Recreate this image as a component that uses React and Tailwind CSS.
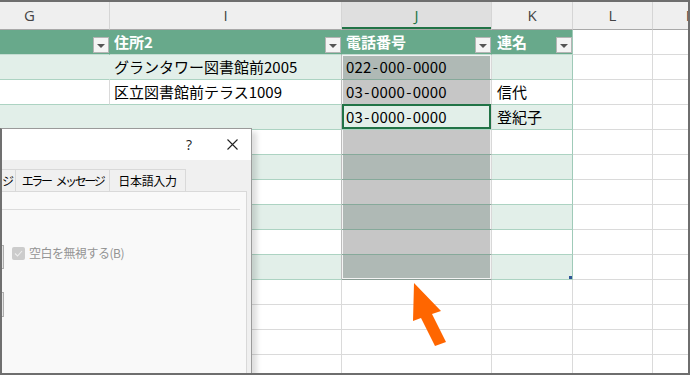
import React from "react";

const JP = "font-['Noto_Sans_CJK_JP','Noto_Sans',sans-serif]";

const COLS = [
  { key: "G", w: "w-[160px]" },
  { key: "I", w: "w-[232px]" },
  { key: "J", w: "w-[150px]" },
  { key: "K", w: "w-[81px]" },
  { key: "L", w: "w-[80px]" },
  { key: "M", w: "w-[80px]" },
];

const DATA = {
  1: { I: "グランタワー図書館前2005", J: "022-000-0000", K: "" },
  2: { I: "区立図書館前テラス1009", J: "03-0000-0000", K: "信代" },
  3: { I: "", J: "03-0000-0000", K: "登紀子" },
};

function Phone({ v }) {
  const parts = v.split("-");
  return (
    <span className="inline-flex">
      {parts.map((p, i) => (
        <React.Fragment key={i}>
          {i > 0 && <span className="inline-block w-[8px] text-center">-</span>}
          <span className="tracking-[0.15px]">{p}</span>
        </React.Fragment>
      ))}
    </span>
  );
}

function DropBtn() {
  return (
    <div className="absolute right-0 bottom-[1px] w-[16px] h-[16px] bg-[#f4f4f4] border border-[#b4b4b4] flex items-center justify-center">
      <svg width="8" height="5" viewBox="0 0 8 5" className="mt-[2px]">
        <polygon points="0,0 8,0 4,4" fill="#555" />
      </svg>
    </div>
  );
}

function ColHeader() {
  return (
    <div className="flex h-[28px] shrink-0">
      {COLS.map((c) => {
        const sel = c.key === "J";
        return (
          <div
            key={c.key}
            className={`${c.w} shrink-0 h-full flex items-center justify-center border-r border-b border-r-[#d5d5d5] border-b-[#a9a9a9] font-['Open_Sans','Noto_Sans',sans-serif] text-[15px] ${
              sel
                ? "bg-[#dfdfdf] text-[#217346] shadow-[inset_0_-2px_0_#217346]"
                : "bg-[#efefef] text-[#444]"
            }`}
          >
            {c.key}
          </div>
        );
      })}
    </div>
  );
}

function TableHeader() {
  const titles = { G: "", I: "住所2", J: "電話番号", K: "連名" };
  return (
    <div className="flex h-[25px] shrink-0">
      {COLS.map((c) => {
        if (c.key === "L" || c.key === "M") {
          return (
            <div key={c.key} className={`${c.w} shrink-0 h-full bg-white border-r border-b border-[#dadada]`} />
          );
        }
        return (
          <div
            key={c.key}
            className={`${c.w} shrink-0 h-full relative bg-[#68a98b] border-b border-b-[#c4ddd2] ${
              c.key === "K" ? "border-r border-r-[#9fcab8]" : "border-r border-r-[#68a98b]"
            } flex items-center ${c.key === "K" ? "pl-[5px]" : "pl-[4px]"} text-white font-bold text-[15px] ${JP}`}
          >
            {titles[c.key]}
            <DropBtn />
          </div>
        );
      })}
    </div>
  );
}

function BodyRow({ r }) {
  const inTable = r <= 9;
  const band = inTable && r % 2 === 1;
  const d = DATA[r] || {};
  return (
    <div className={`flex h-[25px] shrink-0 text-[15px] text-black ${JP}`}>
      {COLS.map((c) => {
        const k = c.key;
        if (!inTable || k === "L" || k === "M") {
          return (
            <div key={k} className={`${c.w} shrink-0 h-full bg-white border-r border-b border-[#dadada]`} />
          );
        }
        if (k === "J") {
          if (r === 3) {
            return (
              <div
                key={k}
                className={`${c.w} shrink-0 h-full relative bg-[#e2efe9] border-r border-b border-r-[#d8d8d8] border-b-[#acd3c2] flex items-center pl-[4px]`}
              >
                <Phone v={d.J} />
                <div className="absolute left-0 right-0 top-[-1px] bottom-0 border-2 border-[#217346]" />
              </div>
            );
          }
          return (
            <div
              key={k}
              className={`${c.w} shrink-0 h-full relative border-r border-b border-r-[#d8d8d8] ${
                r === 9 ? "border-b-[#8a9d95]" : "border-b-[#86a99a]"
              } ${band ? "bg-[#afb9b5]" : "bg-[#c6c6c6]"} ${
                r === 1
                  ? "shadow-[inset_1px_0_0_#f4f4f4,inset_-1px_0_0_#f4f4f4,inset_0_1px_0_#f4f4f4]"
                  : r === 9
                  ? "shadow-[inset_1px_0_0_#f4f4f4,inset_-1px_0_0_#f4f4f4,inset_0_-1px_0_#f4f4f4]"
                  : "shadow-[inset_1px_0_0_#f4f4f4,inset_-1px_0_0_#f4f4f4]"
              } flex items-center pl-[4px]`}
            >
              {d.J ? <Phone v={d.J} /> : null}
            </div>
          );
        }
        const bg = band ? "bg-[#e2efe9]" : "bg-white";
        let br = "";
        if (k === "G") br = band ? "border-r-[#e2efe9]" : "border-r-[#dadada]";
        if (k === "I") br = "border-r-[#bdbdbd]";
        if (k === "K") br = "border-r-[#9fcab8]";
        return (
          <div
            key={k}
            className={`${c.w} shrink-0 h-full relative ${bg} border-r border-b ${br} border-b-[#acd3c2] flex items-center ${
              k === "K" ? "pl-[5px]" : "pl-[4px]"
            } whitespace-nowrap`}
          >
            {d[k] || null}
            {k === "K" && r === 9 ? (
              <div className="absolute right-0 bottom-0 w-[3px] h-[3px] bg-[#2f5597]" />
            ) : null}
          </div>
        );
      })}
    </div>
  );
}

function Dialog() {
  return (
    <div className={`absolute left-0 top-[126px] bottom-0 w-[252px] flex flex-col bg-[#f0f0f0] border-t border-r border-[#9a9a9a] border-l-2 border-l-[#707070] shadow-[5px_4px_5px_rgba(0,0,0,0.13)] ${JP}`}>
      <div className="h-[31px] shrink-0 bg-white flex items-center justify-end">
        <span className="font-['Open_Sans',sans-serif] text-[14px] text-[#222] mr-[35px]">?</span>
        <svg width="11" height="11" viewBox="0 0 11 11" className="mr-[13px]">
          <path d="M0.5 0.5 L10.5 10.5 M10.5 0.5 L0.5 10.5" stroke="#222" strokeWidth="1.1" />
        </svg>
      </div>
      <div className="h-[9px] shrink-0" />
      <div className="h-[22px] shrink-0 flex text-[12px] text-black">
        <div className="w-[14px] h-full overflow-hidden border-t border-r border-[#d9d9d9] flex justify-end items-center">
          <span className="whitespace-nowrap mr-[1px]">メッセージ</span>
        </div>
        <div className="w-[94px] h-full border-t border-r border-[#d9d9d9] flex items-center justify-center">
          <span className="whitespace-nowrap tracking-[-2.4px]">エラー</span>
          <span className="whitespace-nowrap tracking-[-2.4px] ml-[5px]">メッセージ</span>
        </div>
        <div className="w-[76px] h-full border-t border-r border-[#d9d9d9] flex items-center justify-center">
          <span className="whitespace-nowrap tracking-[-0.3px]">日本語入力</span>
        </div>
      </div>
      <div className="flex-1 w-[245px] bg-[#f9f9f9] border-t border-r border-[#d9d9d9] flex flex-col">
        <div className="mt-[17px] w-[238px] h-[1px] bg-[#dcdcdc]" />
        <div className="mt-[35px] flex items-start">
          <div className="w-[2px] h-[24px] border-y border-r border-[#adadad] bg-[#e6e6e6]" />
          <div className="ml-[8px] mt-[2px] w-[13px] h-[13px] rounded-[2px] bg-[#cccccc] flex items-center justify-center">
            <svg width="9" height="7" viewBox="0 0 9 7">
              <path d="M1 3.5 L3.5 6 L8 1" stroke="#eeeeee" strokeWidth="1.1" fill="none" />
            </svg>
          </div>
          <span className="ml-[4px] mt-[-1px] text-[12px] text-[#949494] whitespace-nowrap tracking-[-0.5px]">空白を無視する(B)</span>
        </div>
        <div className="mt-[23px] w-[2px] h-[25px] border-y border-r border-[#adadad] bg-[#e6e6e6]" />
      </div>
    </div>
  );
}

function Arrow() {
  return (
    <svg className="absolute left-[405px] top-[278px]" width="50" height="75" viewBox="0 0 50 75">
      <polygon points="9,3 36,31 27,34 41,62 30,66 16,38 8,41" fill="#ff6600" />
    </svg>
  );
}

export default function App() {
  const rows = [];
  for (let r = 1; r <= 14; r++) rows.push(<BodyRow key={r} r={r} />);
  return (
    <div className="w-[690px] h-[375px] border-t-2 border-r-2 border-b-2 border-[#6e6e6e] overflow-hidden bg-white">
      <div className="relative w-full h-full overflow-hidden">
        <div className="ml-[-50px] flex flex-col w-[800px]">
          <ColHeader />
          <TableHeader />
          {rows}
        </div>
        <Dialog />
        <Arrow />
      </div>
    </div>
  );
}
